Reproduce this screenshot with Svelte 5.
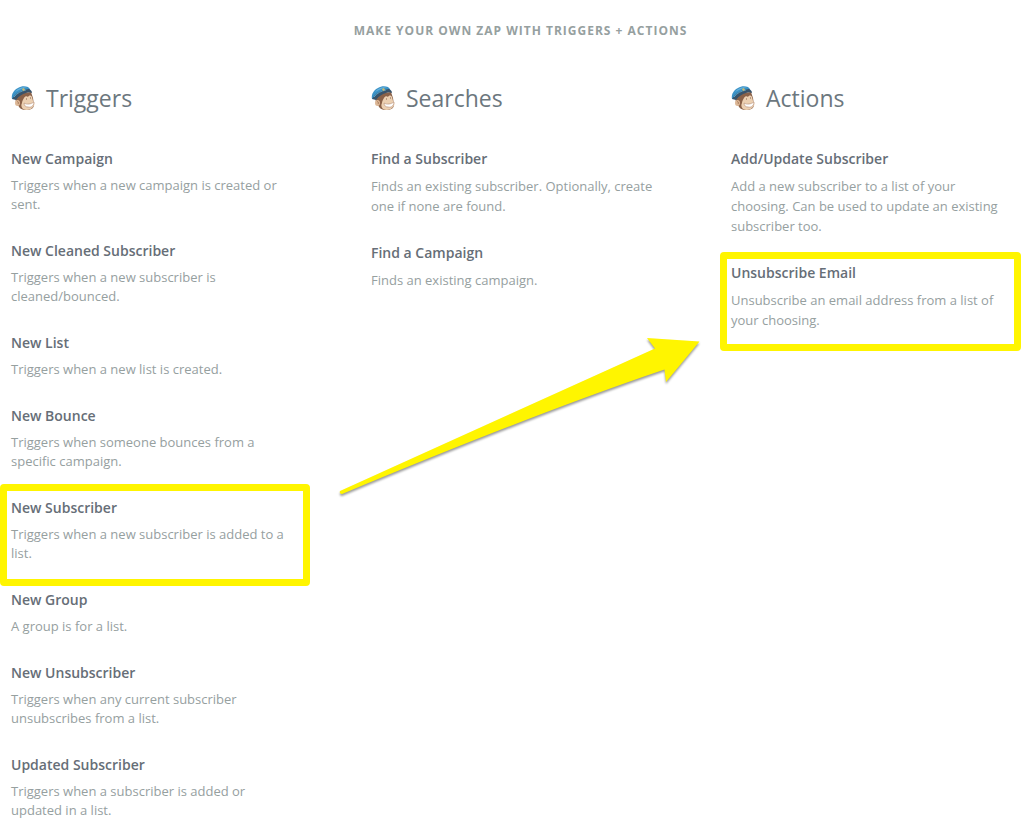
<script>
    const columns = [
        {
            title: 'Triggers',
            compact: true,
            items: [
                { name: 'New Campaign', text: 'Triggers when a new campaign is created or sent.' },
                { name: 'New Cleaned Subscriber', text: 'Triggers when a new subscriber is cleaned/bounced.' },
                { name: 'New List', text: 'Triggers when a new list is created.' },
                { name: 'New Bounce', text: 'Triggers when someone bounces from a specific campaign.' },
                { name: 'New Subscriber', text: 'Triggers when a new subscriber is added to a list.', mark: 'from' },
                { name: 'New Group', text: 'A group is for a list.' },
                { name: 'New Unsubscriber', text: 'Triggers when any current subscriber unsubscribes from a list.' },
                { name: 'Updated Subscriber', text: 'Triggers when a subscriber is added or updated in a list.' }
            ]
        },
        {
            title: 'Searches',
            items: [
                { name: 'Find a Subscriber', text: 'Finds an existing subscriber. Optionally, create one if none are found.' },
                { name: 'Find a Campaign', text: 'Finds an existing campaign.' }
            ]
        },
        {
            title: 'Actions',
            items: [
                { name: 'Add/Update Subscriber', text: 'Add a new subscriber to a list of your choosing. Can be used to update an existing subscriber too.' },
                { name: 'Unsubscribe Email', text: 'Unsubscribe an email address from a list of your choosing.', mark: 'to' }
            ]
        }
    ];
</script>

<main>
    <h1>Make your own Zap with Triggers + Actions</h1>
    <div class="columns">
        {#each columns as column}
            <section class:compact={column.compact}>
                <h2>
                    <svg class="logo" viewBox="0 0 26 26" aria-hidden="true">
                        <path d="M5 13C4 16 5 18 7 20c1 3 4 5 8 5 5 0 8-2 8-5l-1-7-2-6-9 1z" fill="#8a6148" />
                        <path d="M13 13c1-2 3-2 4-1 1-2 3-2 4 0l1 4c2 2 2 4 0 6-2 3-7 4-10 2-2-2-2-4-1-6 0-2 1-3 2-5z" fill="#ecd0b2" />
                        <ellipse cx="6.500" cy="18" rx="2.500" ry="3" fill="#dcb796" />
                        <path d="M6 17c1-1 2 1 1 2" fill="none" stroke="#9a6c50" stroke-width=".8" />
                        <path d="M13 18c3 2 7 1 10-1 0 3-2 6-6 5-2 0-4-1-4-4z" fill="#fff" stroke="#b18a70" stroke-width=".6" />
                        <path d="M15 14l1 0M19 13l1 0" stroke="#7b5744" stroke-width=".9" />
                        <path d="M1 14C0 9 3 5 7 3c3-2 7-2 10-1l2 2-1 3C12 6 7 9 4 14z" fill="#3b92c6" />
                        <path d="M4 7c3-4 7-5 12-5-5 1-8 3-12 5z" fill="#67b2dc" />
                        <path d="M1 14C4 9 8 6 13 5l5-1c2 1 3 2 3 4-2-1-4-1-6 0-4 1-7 3-10 7z" fill="#37536b" />
                        <path d="M3 12C6 8 10 6 15 5" fill="none" stroke="#569cc1" stroke-width="1" />
                        <path d="M11 4l2-1 1 2-2 1z" fill="#cdbb6d" />
                    </svg>
                    {column.title}
                </h2>
                <ul>
                    {#each column.items as item}
                        <li class={item.mark}>
                            <h3>{item.name}</h3>
                            <p>{item.text}</p>
                        </li>
                    {/each}
                </ul>
            </section>
        {/each}
    </div>
    <svg class="arrow" width="368" height="168" viewBox="0 0 368 168" aria-hidden="true">
        <path d="M4 161L319 18.500 311 8 363.500 11.500 330 52 328.500 39.500Q200 83 6 164Q3 164 4 161z" />
    </svg>
</main>

<style>
    :global(body) {
        margin: 0;
        background: #fff;
    }

    main {
        position: relative;
        padding: 20px 0 0 11px;
        font-family: "Open Sans", sans-serif;
        font-size: 13px;
        color: #96a09f;
    }

    h1, h2, h3, p, ul {
        margin: 0;
        padding: 0;
    }

    h1 {
        font-size: 12px;
        line-height: 22px;
        font-weight: 700;
        letter-spacing: 1px;
        text-align: center;
        text-transform: uppercase;
    }

    .columns {
        display: grid;
        grid-template-columns: repeat(3, 1fr);
        gap: 61px;
        margin-top: 40px;
    }

    h2 {
        display: flex;
        align-items: center;
        gap: 9px;
        margin-bottom: 35px;
        font-size: 23px;
        line-height: 32px;
        font-weight: 400;
        color: #6c777e;
    }

    .logo {
        width: 26px;
        height: 26px;
    }

    ul {
        list-style: none;
    }

    li {
        position: relative;
        padding-bottom: 27px;
    }

    h3 {
        margin-bottom: 7px;
        font-size: 14px;
        line-height: 20px;
        font-weight: 600;
        color: #666e77;
    }

    p {
        padding-right: 16px;
        line-height: 20px;
    }

    .compact p {
        line-height: 19px;
    }

    /* marker boxes drawn around the two linked entries */
    .from::after, .to::after {
        content: "";
        position: absolute;
        border: 7px solid #fff500;
        border-radius: 4px;
    }

    .from::after {
        inset: -14px 0 4px -11px;
    }

    .to::after {
        inset: -11px 9px 6px -11px;
    }

    .arrow {
        position: absolute;
        top: 330px;
        left: 336px;
        fill: #fff500;
        filter: drop-shadow(0 2px 1px rgba(0, 0, 0, 0.4));
    }
</style>
